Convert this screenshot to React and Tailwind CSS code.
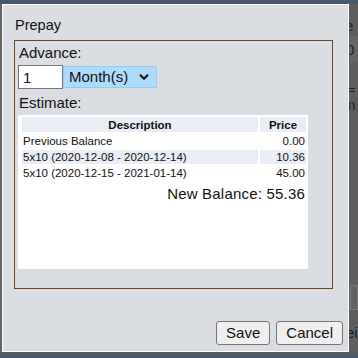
import React, { useState } from "react";
import { ChevronDown } from "lucide-react";

const rows = [
  { desc: "Previous Balance", price: "0.00" },
  { desc: "5x10 (2020-12-08 - 2020-12-14)", price: "10.36" },
  { desc: "5x10 (2020-12-15 - 2021-01-14)", price: "45.00" },
];

const App = () => {
  const [amount, setAmount] = useState("1");

  return (
    <div
      className="w-[358px] h-[358px] flex flex-col overflow-hidden bg-[#5e5e5e] text-[#111]"
      style={{ fontFamily: '"Liberation Sans", Arial, sans-serif' }}
    >
      <div className="h-[4px] bg-[#4a586c]" />
      <div className="flex h-[348px]">
        <div className="w-[2px] bg-[#636363]" />
        {/* dialog */}
        <div className="w-[347px] flex flex-col border border-white bg-[#dadde1]">
          <p className="text-[14.5px] leading-[16px] ml-[12px] mt-[12px]">Prepay</p>
          <div className="mt-[7px] ml-[11px] w-[319px] h-[249px] border border-[#6e4522] flex flex-col">
            <p className="text-[15px] leading-[17px] ml-[4px] mt-[3px]">Advance:</p>
            <div className="flex items-center ml-[3px] mt-[4px]">
              <input
                type="text"
                value={amount}
                onChange={(e) => setAmount(e.target.value)}
                className="w-[45px] h-[24px] border border-[#767676] bg-white text-[15px] px-[4px] outline-none"
              />
              <div className="w-[94px] h-[22px] bg-[#acdbfc] border border-[#93cbf2] flex items-center justify-between pl-[5px] pr-[5px] text-[15px]">
                <span>Month(s)</span>
                <ChevronDown size={14} strokeWidth={3.5} />
              </div>
            </div>
            <p className="text-[15px] leading-[17px] ml-[4px] mt-[5px]">Estimate:</p>
            <div className="mt-[4px] ml-[3px] w-[290px] h-[154px] bg-white pl-[2px]">
              <table className="w-full border-separate border-spacing-[2px] text-[11.5px] leading-[14px]">
                <thead>
                  <tr>
                    <th className="bg-[#e8edf6] h-[15px] font-bold text-center">Description</th>
                    <th className="bg-[#e8edf6] h-[15px] w-[46px] font-bold text-center">Price</th>
                  </tr>
                </thead>
                <tbody>
                  {rows.map((r, i) => (
                    <tr key={i}>
                      <td className={`h-[14px] pl-[1px] ${i === 1 ? "bg-[#e8edf6]" : ""}`}>{r.desc}</td>
                      <td className={`h-[14px] pr-[1px] text-right ${i === 1 ? "bg-[#e8edf6]" : ""}`}>{r.price}</td>
                    </tr>
                  ))}
                </tbody>
              </table>
              <p className="text-right text-[15px] leading-[17px] tracking-[0.2px] pr-[3px] mt-[3px]">
                New Balance: 55.36
              </p>
            </div>
          </div>
          <div className="flex-1" />
          <div className="flex justify-end gap-[6px] mr-[5px] mb-[6px]">
            <button className="h-[24px] px-[9px] text-[15px] bg-[#efefef] border border-[#767676] rounded-[3px]">
              Save
            </button>
            <button className="h-[24px] px-[9px] text-[15px] bg-[#efefef] border border-[#767676] rounded-[3px]">
              Cancel
            </button>
          </div>
        </div>
        {/* page behind the dialog */}
        <div className="flex-1 flex flex-col overflow-hidden text-[15px] leading-[17px] text-[#1b1f3a]">
          <span className="mt-[13px] -ml-[4px]">e</span>
          <div className="mt-[2px] ml-[1px] h-[26px] bg-[#666] flex items-center">
            <span className="-ml-[4px]">0</span>
          </div>
          <div className="mt-[26px] h-[1px] bg-[#222] w-[6px]" />
          <div className="mt-[2px] h-[1px] bg-[#222] w-[6px]" />
          <span className="mt-[4px] -ml-[6px]">m</span>
          <div className="mt-[172px] ml-[1px] h-[25px] border border-[#7a7a7a] bg-[#626262]" />
          <span className="mt-[14px] -ml-[3px] text-[#1a1a1a]">ei</span>
        </div>
      </div>
      <div className="h-[3px] bg-[#5a5a5a]" />
      <div className="h-[3px] bg-[#465a78]" />
    </div>
  );
};

export default App;
